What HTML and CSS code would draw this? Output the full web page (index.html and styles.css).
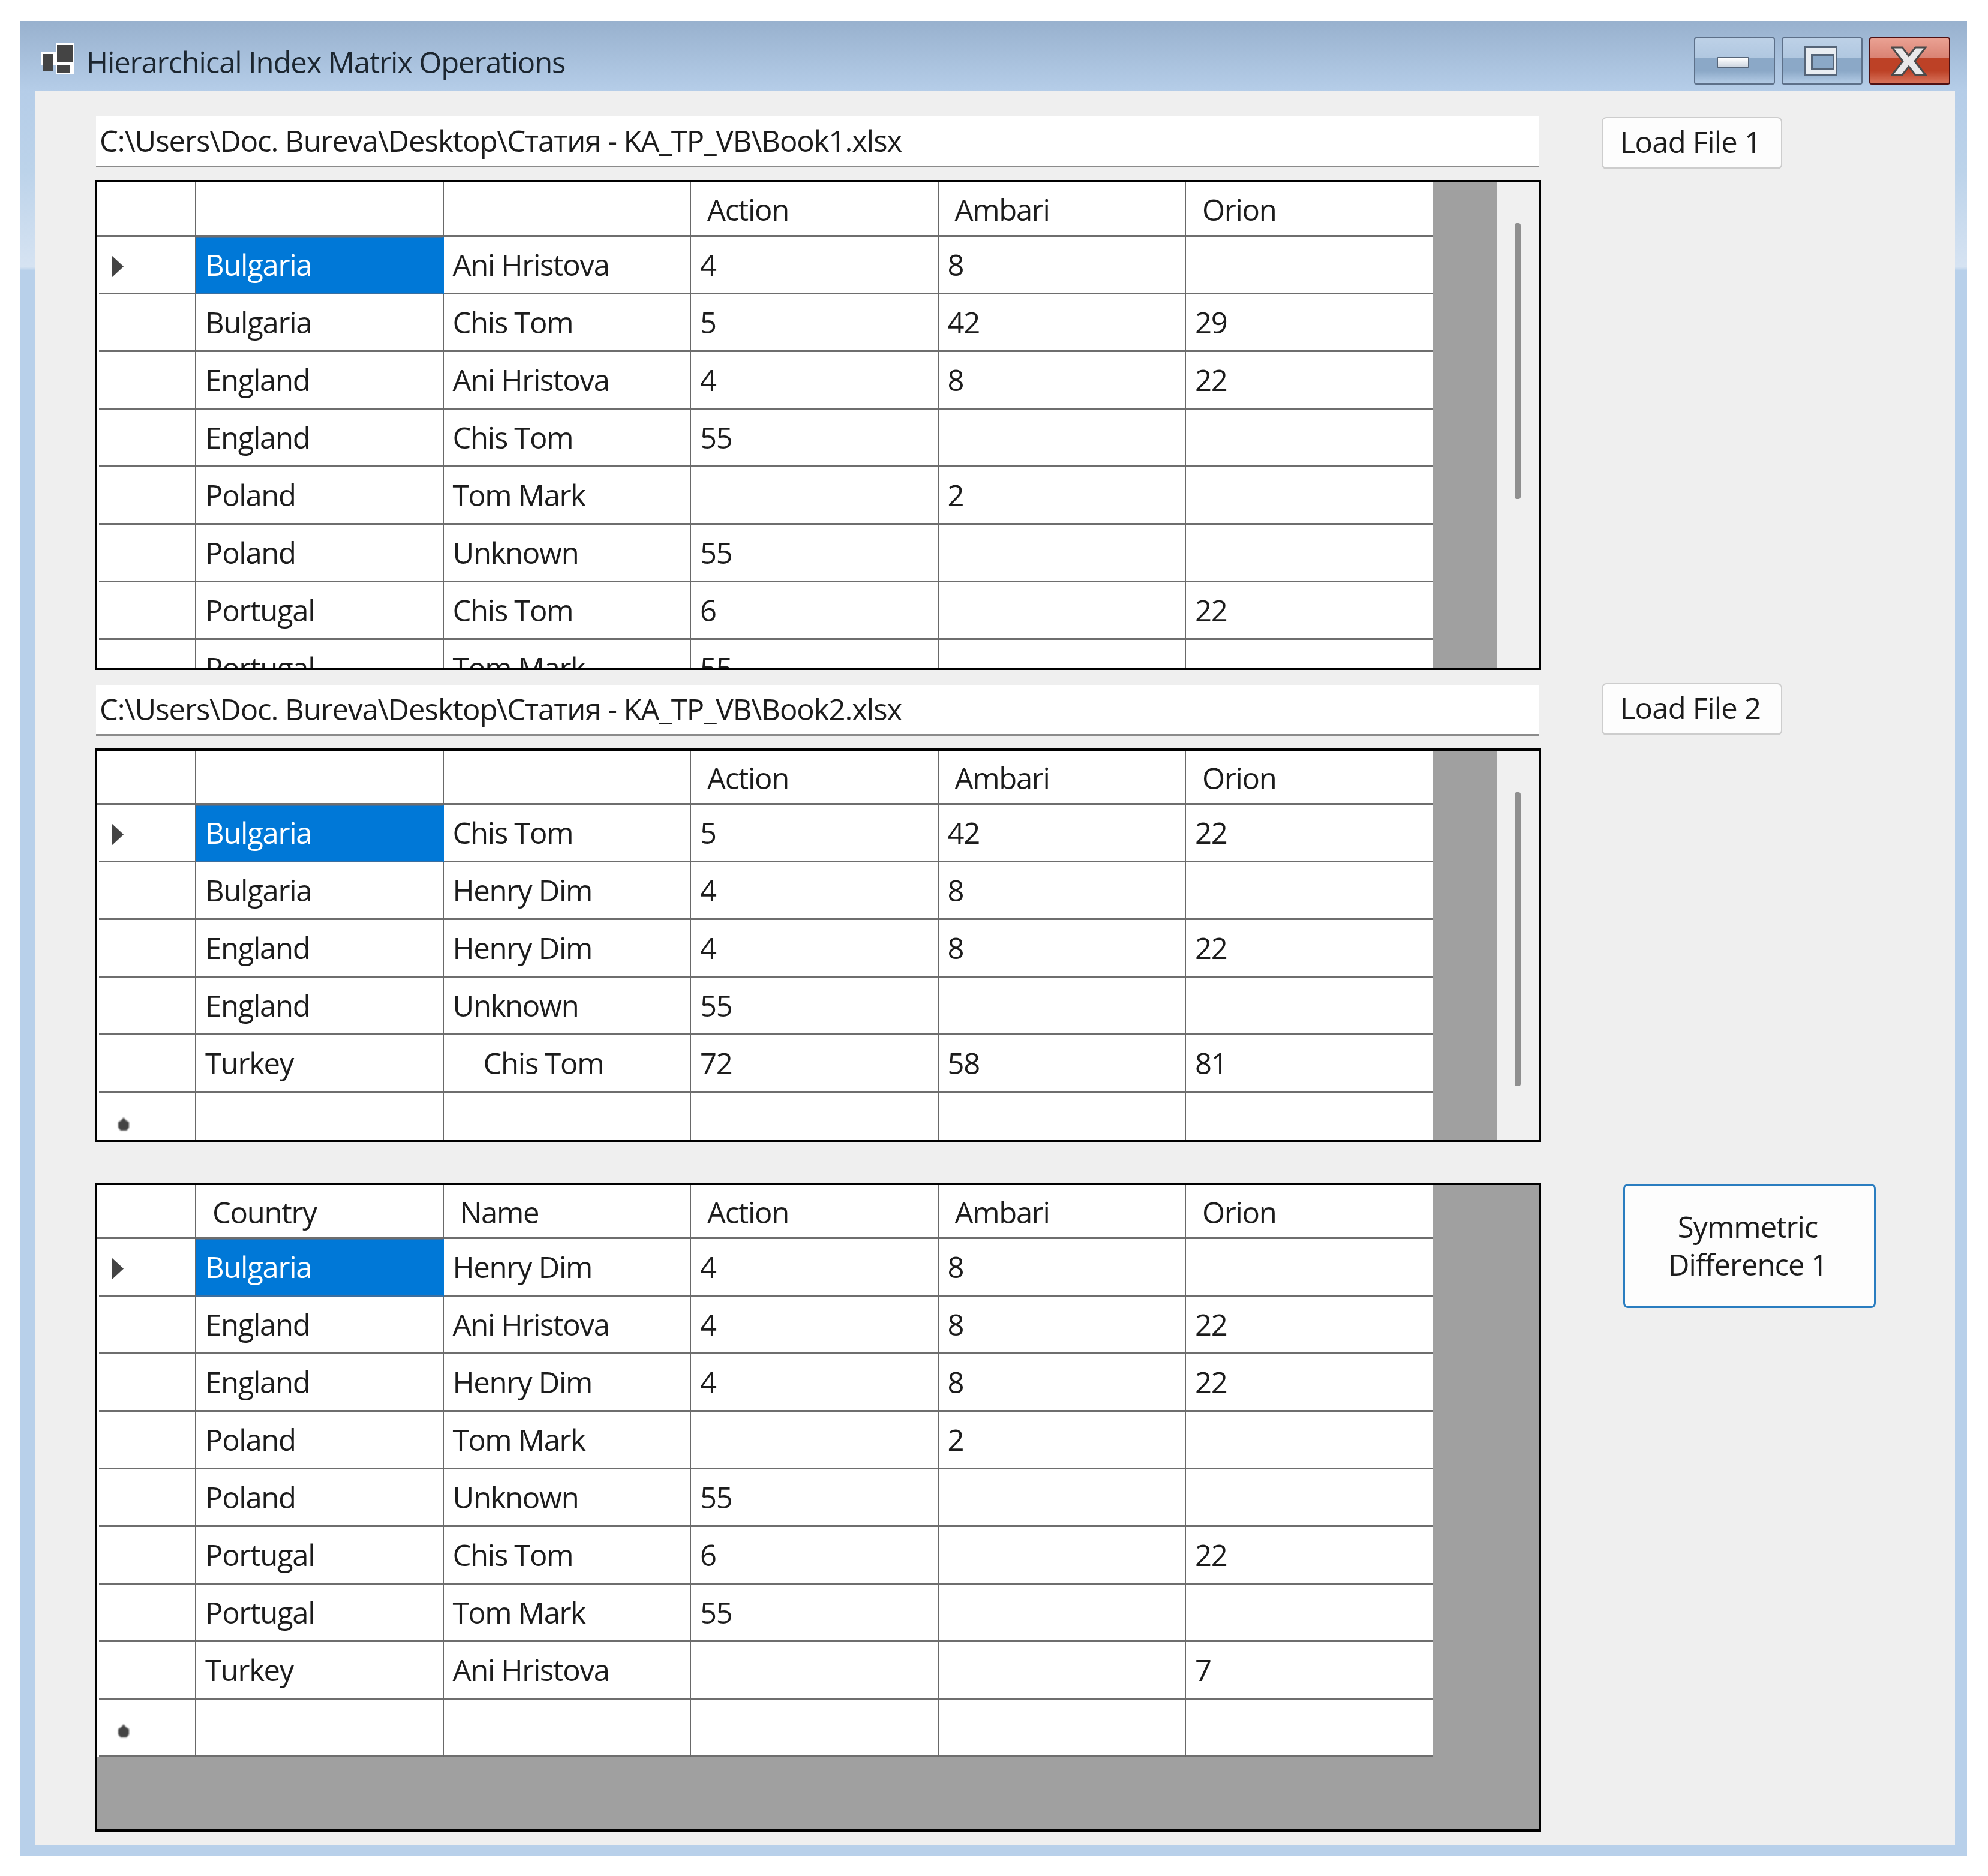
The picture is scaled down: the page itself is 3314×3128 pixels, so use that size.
FILE: index.html
```html
<!DOCTYPE html>
<html lang="en">
<head>
<meta charset="utf-8">
<title>Hierarchical Index Matrix Operations</title>
<link rel="stylesheet" href="styles.css">
</head>
<body>
<div class="window">
  <header class="titlebar">
    <svg class="app-icon" viewBox="0 0 59 52"><path fill="#fff" d="M24 0h30v52H24V36H0V15h24z"/><rect fill="#444" x="26" y="3" width="26" height="28"/><rect fill="#444" x="26" y="36" width="21" height="13"/><rect fill="#444" x="3" y="18" width="17" height="29"/></svg>
    <h1 class="title">Hierarchical Index Matrix Operations</h1>
    <div class="caption-buttons">
      <div class="cap cap-min"><span class="glyph-min"></span></div>
      <div class="cap cap-max"><span class="glyph-max"></span></div>
      <div class="cap cap-close"><svg class="glyph-x" viewBox="0 0 60 50"><path fill="#e9e9e9" stroke="#4b4b4b" stroke-width="3" d="M2 2h17l11 14L41 2h17L40 25l18 23H41L30 34 19 48H2l18-23z"/></svg></div>
    </div>
  </header>
  <main class="client">
    <section class="pane pane-first">
      <div class="left">
        <div class="path">C:\Users\Doc. Bureva\Desktop\Статия - KA_TP_VB\Book1.xlsx</div>
        <div class="grid grid-a">
          <div class="sheet">
            <table>
              <tr class="head"><td class="rh"></td><td></td><td></td><td class="hc">Action</td><td class="hc">Ambari</td><td class="hc">Orion</td></tr>
              <tr><td class="rh"><svg class="arrow" viewBox="0 0 21 37"><path fill="#444" d="M1 0l20 18.500L1 37z"/></svg></td><td class="sel">Bulgaria</td><td>Ani Hristova</td><td>4</td><td>8</td><td></td></tr>
              <tr><td class="rh"></td><td>Bulgaria</td><td>Chis Tom</td><td>5</td><td>42</td><td>29</td></tr>
              <tr><td class="rh"></td><td>England</td><td>Ani Hristova</td><td>4</td><td>8</td><td>22</td></tr>
              <tr><td class="rh"></td><td>England</td><td>Chis Tom</td><td>55</td><td></td><td></td></tr>
              <tr><td class="rh"></td><td>Poland</td><td>Tom Mark</td><td></td><td>2</td><td></td></tr>
              <tr><td class="rh"></td><td>Poland</td><td>Unknown</td><td>55</td><td></td><td></td></tr>
              <tr><td class="rh"></td><td>Portugal</td><td>Chis Tom</td><td>6</td><td></td><td>22</td></tr>
              <tr><td class="rh"></td><td>Portugal</td><td>Tom Mark</td><td>55</td><td></td><td></td></tr>
            </table>
          </div>
          <div class="scroll"><div class="thumb thumb-a"></div></div>
        </div>
      </div>
      <button class="btn btn-load">Load File 1</button>
    </section>
    <section class="pane pane-second">
      <div class="left">
        <div class="path">C:\Users\Doc. Bureva\Desktop\Статия - KA_TP_VB\Book2.xlsx</div>
        <div class="grid grid-b">
          <div class="sheet">
            <table>
              <tr class="head"><td class="rh"></td><td></td><td></td><td class="hc">Action</td><td class="hc">Ambari</td><td class="hc">Orion</td></tr>
              <tr><td class="rh"><svg class="arrow" viewBox="0 0 21 37"><path fill="#444" d="M1 0l20 18.500L1 37z"/></svg></td><td class="sel">Bulgaria</td><td>Chis Tom</td><td>5</td><td>42</td><td>22</td></tr>
              <tr><td class="rh"></td><td>Bulgaria</td><td>Henry Dim</td><td>4</td><td>8</td><td></td></tr>
              <tr><td class="rh"></td><td>England</td><td>Henry Dim</td><td>4</td><td>8</td><td>22</td></tr>
              <tr><td class="rh"></td><td>England</td><td>Unknown</td><td>55</td><td></td><td></td></tr>
              <tr><td class="rh"></td><td>Turkey</td><td class="indent">Chis Tom</td><td>72</td><td>58</td><td>81</td></tr>
              <tr><td class="rh"><svg class="star" viewBox="0 0 22 24"><path fill="#444" d="M11 0l4 5 5 3v9l-4 5H6l-4-5V8l5-3z"/></svg></td><td></td><td></td><td></td><td></td><td></td></tr>
            </table>
          </div>
          <div class="scroll"><div class="thumb thumb-b"></div></div>
        </div>
      </div>
      <button class="btn btn-load btn-load-two">Load File 2</button>
    </section>
    <section class="pane pane-third">
      <div class="left">
        <div class="grid grid-c">
          <div class="sheet">
            <table>
              <tr class="head"><td class="rh"></td><td class="hc">Country</td><td class="hc">Name</td><td class="hc">Action</td><td class="hc">Ambari</td><td class="hc">Orion</td></tr>
              <tr><td class="rh"><svg class="arrow" viewBox="0 0 21 37"><path fill="#444" d="M1 0l20 18.500L1 37z"/></svg></td><td class="sel">Bulgaria</td><td>Henry Dim</td><td>4</td><td>8</td><td></td></tr>
              <tr><td class="rh"></td><td>England</td><td>Ani Hristova</td><td>4</td><td>8</td><td>22</td></tr>
              <tr><td class="rh"></td><td>England</td><td>Henry Dim</td><td>4</td><td>8</td><td>22</td></tr>
              <tr><td class="rh"></td><td>Poland</td><td>Tom Mark</td><td></td><td>2</td><td></td></tr>
              <tr><td class="rh"></td><td>Poland</td><td>Unknown</td><td>55</td><td></td><td></td></tr>
              <tr><td class="rh"></td><td>Portugal</td><td>Chis Tom</td><td>6</td><td></td><td>22</td></tr>
              <tr><td class="rh"></td><td>Portugal</td><td>Tom Mark</td><td>55</td><td></td><td></td></tr>
              <tr><td class="rh"></td><td>Turkey</td><td>Ani Hristova</td><td></td><td></td><td>7</td></tr>
              <tr><td class="rh"><svg class="star" viewBox="0 0 22 24"><path fill="#444" d="M11 0l4 5 5 3v9l-4 5H6l-4-5V8l5-3z"/></svg></td><td></td><td></td><td></td><td></td><td></td></tr>
            </table>
          </div>
        </div>
      </div>
      <button class="btn btn-sym">Symmetric<br>Difference 1</button>
    </section>
  </main>
</div>
</body>
</html>
```
FILE: styles.css
```css
* { box-sizing: border-box; }
html, body { margin: 0; background: #fff; }
body {
  padding: 35px 35px 34px 34px;
  font-family: "Open Sans", "Noto Sans", "Liberation Sans", sans-serif;
  font-size: 49px;
  letter-spacing: -1.05px;
  color: #1c1c1c;
}
.window {
  width: 3245px;
  height: 3059px;
  padding: 0 20px 17px 24px;
  display: flex;
  flex-direction: column;
  background: linear-gradient(#98b1ce 0, #b5cde8 116px, #bcd3ea 250px, #d6e3f2 410px, #b8d0ea 416px, #b8d0ea 100%);
}
.titlebar {
  height: 116px;
  flex: none;
  display: flex;
  align-items: flex-start;
  margin-left: -24px;
  margin-right: -20px;
  padding: 37px 28px 0 35px;
}
.app-icon { width: 59px; height: 52px; flex: none; }
.title {
  margin: -2px 0 0 16px;
  font-size: 49px;
  line-height: 66px;
  font-weight: 400;
  letter-spacing: -1.15px;
  color: #1c2630;
}
.caption-buttons { margin-left: auto; margin-top: -10px; display: flex; gap: 11px; }
.cap {
  width: 135px;
  height: 79px;
  border: 2px solid #5d7089;
  border-radius: 4px;
  display: flex;
  align-items: center;
  justify-content: center;
  background: linear-gradient(#bdd1e7 0, #b0c7e0 44%, #8ba8c7 44%, #8ba8c7 72%, #b4cce6 100%);
}
.cap-close {
  border-color: #4f1012;
  background: linear-gradient(#eaa193 0, #d98273 44%, #bd4126 44%, #bd4126 72%, #d8745c 100%);
}
.glyph-min {
  display: block;
  width: 54px;
  height: 18px;
  margin: 4px 6px 0 0;
  border: 2px solid #566578;
  border-radius: 2px;
  background: linear-gradient(#fff, #d0d8e2);
}
.glyph-max {
  display: block;
  width: 55px;
  height: 49px;
  margin-right: 4px;
  border: 3px solid #566578;
  background: #e9edf2;
  padding: 10px 8px 12px;
}
.glyph-max::after {
  content: "";
  display: block;
  width: 100%;
  height: 100%;
  border: 3px solid #566578;
  background: #8ba8c7;
}
.glyph-x { width: 60px; height: 50px; margin-right: 4px; }

.client {
  flex: 1;
  background: #efefef;
  padding: 43px 0 0 100px;
}
.pane { display: flex; align-items: flex-start; }
.pane-second { margin-top: 25px; }
.pane-third { margin-top: 68px; }
.left { width: 2411px; flex: none; }
.path {
  margin-left: 2px;
  margin-right: 3px;
  height: 85px;
  padding-left: 6px;
  line-height: 80px;
  background: #fff;
  border-bottom: 3px solid #8b8b8b;
  white-space: nowrap;
}
.grid {
  margin-top: 21px;
  border: 4px solid #000;
  background: #a0a0a0;
  display: flex;
  overflow: hidden;
}
.grid-a { height: 817px; }
.grid-b { height: 656px; }
.grid-c { height: 1082px; margin-top: 0; }
.sheet { width: 2227px; flex: none; overflow: hidden; }
.grid-c .sheet { align-self: flex-start; }
table {
  width: 2227.5px;
  table-layout: fixed;
  border-collapse: separate;
  border-spacing: 0;
  background: #fff;
  letter-spacing: -1.3px;
}
td {
  width: 412.5px;
  height: 96px;
  padding: 0 0 1px 15px;
  border-right: 2px solid #696969;
  border-bottom: 3px solid #6e6e6e;
  white-space: nowrap;
  overflow: hidden;
  line-height: 66px;
  vertical-align: middle;
}
.head td { height: 91px; padding-bottom: 0; }
.grid-b .head td { height: 90px; }
.grid-c .head td { height: 90px; }
td.hc { padding-left: 27px; padding-top: 2px; }
td.rh {
  width: 165px;
  padding: 0 0 3px 23px;
  border-bottom: 0;
  background: linear-gradient(#6e6e6e, #6e6e6e) no-repeat right bottom / calc(100% - 3px) 3px;
}
.head td.rh { background-size: 100% 3px; }
td.sel {
  background: #0078d7;
  color: #fff;
  border-right-color: #0078d7;
  border-bottom-color: #3c6f9f;
  box-shadow: inset 0 2px 0 #3c6f9f;
}
td.indent { padding-left: 66px; }
.arrow { display: block; width: 21px; height: 37px; margin-top: 5px; }
.star { display: block; width: 22px; height: 24px; margin: 12px 0 0 10px; filter: blur(1px); }
.scroll { flex: 1; position: relative; margin-left: 107px; background: #f0f0f0; margin-right: 0; }
.grid-c .scroll { display: none; }
.thumb { position: absolute; left: 29px; width: 10px; background: #8f8f8f; border-radius: 4px; }
.thumb-a { top: 68px; height: 460px; }
.thumb-b { top: 69px; height: 490px; }

.btn {
  flex: none;
  font: inherit;
  letter-spacing: inherit;
  color: #1c1c1c;
  background: #fdfdfd;
  border: 2px solid #cdcdcd;
  border-radius: 8px;
  padding: 0;
}
.btn-load { width: 301px; height: 87px; margin: 1px 0 0 101px; padding: 0 5px 4px 0; letter-spacing: -0.8px; border-bottom-width: 3px; }
.btn-load-two { margin-top: -3px; }
.btn-sym {
  width: 421px;
  height: 207px;
  margin: 2px 0 0 137px;
  padding: 0 6px 2px 0;
  border: 3px solid #2a7dc0;
  line-height: 63px;
}
```
